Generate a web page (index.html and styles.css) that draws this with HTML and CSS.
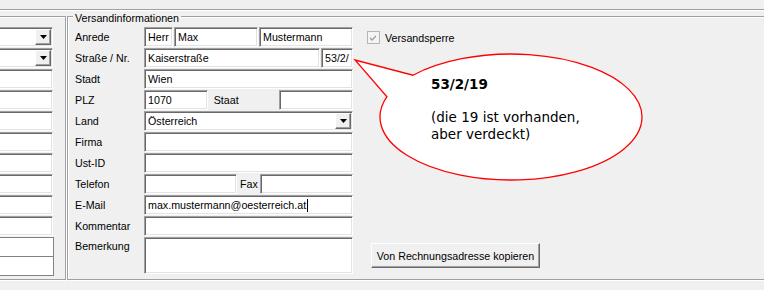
FILE: index.html
```html
<!DOCTYPE html>
<html lang="de">
  <head>
    <title>Versandinformationen</title>
    <link rel="stylesheet" href="styles.css">
  </head>
  <body>
    <div class="topbar"></div>

    <div class="panels">
      <!-- Rechnungsadresse (links, abgeschnitten) -->
      <div class="group billing">
        <div class="input combo"><span class="drop"><svg width="7" height="4" viewBox="0 0 7 4"><path d="M0 0h7L3.5 4z" fill="#000"/></svg></span></div>
        <div class="input combo"><span class="drop"><svg width="7" height="4" viewBox="0 0 7 4"><path d="M0 0h7L3.5 4z" fill="#000"/></svg></span></div>
        <div class="input"></div>
        <div class="input"></div>
        <div class="input"></div>
        <div class="input"></div>
        <div class="input"></div>
        <div class="input"></div>
        <div class="input"></div>
        <div class="input"></div>
        <div class="list">
          <div class="list-row"></div>
          <div class="list-row"></div>
        </div>
      </div>

      <!-- Versandinformationen -->
      <div class="group shipping">
        <div class="group-title">Versandinformationen</div>
        <div class="shipping-body">
          <div class="form">
            <span class="label">Anrede</span>
            <div class="fields">
              <div class="input w-salutation">Herr</div>
              <div class="input w-first">Max</div>
              <div class="input w-last">Mustermann</div>
            </div>

            <span class="label">Straße / Nr.</span>
            <div class="fields">
              <div class="input w-street">Kaiserstraße</div>
              <div class="input w-number">53/2/</div>
            </div>

            <span class="label">Stadt</span>
            <div class="input">Wien</div>

            <span class="label">PLZ</span>
            <div class="fields tight">
              <div class="input w-zip">1070</div>
              <span class="inline-label w-state-label">Staat</span>
              <div class="input w-state"></div>
            </div>

            <span class="label">Land</span>
            <div class="input combo">Österreich<span class="drop"><svg width="7" height="4" viewBox="0 0 7 4"><path d="M0 0h7L3.5 4z" fill="#000"/></svg></span></div>

            <span class="label">Firma</span>
            <div class="input"></div>

            <span class="label">Ust-ID</span>
            <div class="input"></div>

            <span class="label">Telefon</span>
            <div class="fields tight">
              <div class="input w-phone"></div>
              <span class="inline-label w-fax-label">Fax</span>
              <div class="input w-fax"></div>
            </div>

            <span class="label">E-Mail</span>
            <div class="input">max.mustermann@oesterreich.at<span class="caret"></span></div>

            <span class="label">Kommentar</span>
            <div class="input"></div>

            <span class="label label-top">Bemerkung</span>
            <div class="input"></div>
          </div>

          <div class="side">
            <label class="check">
              <span class="checkbox"><svg width="11" height="11" viewBox="0 0 11 11"><path d="M2 5l2 2 4-4v2l-4 4-2-2z" fill="#a0a0a0"/></svg></span>
              Versandsperre
            </label>
            <button class="btn" type="button">Von Rechnungsadresse kopieren</button>
          </div>
        </div>
      </div>
    </div>

    <!-- Sprechblase -->
    <div class="callout">
      <svg width="764" height="290" viewBox="0 0 764 290">
        <path d="M413 75.2A131 63 0 1 1 387 96.7L355 60Z" fill="#fff" stroke="#ff0000" stroke-width="1.3"/>
      </svg>
      <div class="callout-text">
        <b>53/2/19</b><br><br>
        (die 19 ist vorhanden,<br>
        aber verdeckt)
      </div>
    </div>
  </body>
</html>
```

FILE: styles.css
```css
body {
  margin: 0;
  width: 764px;
  height: 290px;
  overflow: hidden;
  background: #f0f0f0;
  font-family: "Liberation Sans", Arial, sans-serif;
  font-size: 10.7px;
  color: #000;
}

.topbar {
  height: 9px;
  border-bottom: 1px solid #a0a0a0;
  box-shadow: 0 1px #fff;
  margin-bottom: 6px;
}

.panels {
  display: flex;
  gap: 1px;
  height: 264px;
}

/* etched group box */
.group {
  box-sizing: border-box;
  border: 1px solid #a0a0a0;
  box-shadow: inset 1px 1px #fff, 1px 1px #fff;
}

.billing {
  width: 68px;
  margin-left: -2px;
  padding-top: 10px;
  display: flex;
  flex-direction: column;
  gap: 1px;
}
.billing .input { margin-left: -10px; width: 64px; }

.list {
  margin-left: -10px;
  width: 65px;
  height: 39px;
  box-sizing: border-box;
  border: 1px solid #828282;
  background: #fff;
}
.list-row { height: 18px; }
.list-row + .list-row { border-top: 1px solid #828282; }

.shipping {
  flex: 1;
  margin-right: -2px;
  padding-left: 7px;
  display: flex;
  flex-direction: column;
}

.group-title {
  width: fit-content;
  margin: -5px 0 2px -2px;
  padding: 0 2px;
  line-height: 13px;
  background: #f0f0f0;
}

.shipping-body {
  flex: 1;
  display: flex;
}

.form {
  display: grid;
  grid-template-columns: 69px 209px;
  grid-template-rows: repeat(10, 20px) 37px;
  row-gap: 1px;
  align-content: start;
}

.label {
  display: flex;
  align-items: center;
}
.label-top { align-items: flex-start; padding-top: 3px; }

.fields { display: flex; gap: 1px; }
.fields.tight { gap: 0; }
.fields.tight .input:first-child { margin-right: 1px; }

/* sunken text field */
.input {
  box-sizing: border-box;
  height: 20px;
  padding: 0 2px 0 3px;
  display: flex;
  align-items: center;
  background: #fff;
  border: 1px solid;
  border-color: #a0a0a0 #fff #fff #a0a0a0;
  box-shadow: inset 1px 1px #696969, inset -1px -1px #e3e3e3;
  white-space: nowrap;
  overflow: hidden;
}
.form > .input:last-child { height: 37px; }

.w-salutation { width: 29px; }
.w-first { width: 84px; }
.w-last { width: 94px; }
.w-street { width: 176px; }
.w-number { width: 32px; }
.w-zip { width: 64px; }
.w-state-label { width: 71px; padding-left: 5px; }
.w-state { width: 74px; }
.w-phone { width: 93px; }
.w-fax-label { width: 22px; padding-left: 2px; }
.w-fax { width: 93px; }

.inline-label {
  box-sizing: border-box;
  display: flex;
  align-items: center;
}

.combo { padding-right: 1px; justify-content: space-between; }
.drop {
  box-sizing: border-box;
  width: 16px;
  height: 16px;
  margin-left: auto;
  display: flex;
  align-items: center;
  justify-content: center;
  background: #f0f0f0;
  border: 1px solid;
  border-color: #fff #696969 #696969 #fff;
  box-shadow: inset -1px -1px #a0a0a0;
}

.caret {
  display: inline-block;
  width: 1px;
  height: 13px;
  margin-left: 1px;
  background: #000;
}

.side {
  padding: 4px 0 0 14px;
  display: flex;
  flex-direction: column;
  align-items: flex-start;
}

.check {
  display: flex;
  align-items: center;
  gap: 5px;
  height: 13px;
  color: #000;
}
.checkbox {
  box-sizing: border-box;
  width: 13px;
  height: 13px;
  display: flex;
  align-items: center;
  justify-content: center;
  background: #f4f4f4;
  border: 1px solid #b5b5b5;
}

.btn {
  margin: auto 0 11px 4px;
  width: 169px;
  height: 25px;
  padding: 0;
  font-family: inherit;
  font-size: 10.7px;
  color: #000;
  background: #f0f0f0;
  border: 1px solid;
  border-color: #fff #696969 #696969 #fff;
  box-shadow: inset -1px -1px #a0a0a0;
}

/* speech bubble laid over the form */
.callout {
  position: absolute;
  left: 0;
  top: 0;
  width: 764px;
  height: 290px;
  pointer-events: none;
}
.callout svg { display: block; }
.callout-text {
  position: absolute;
  left: 431px;
  top: 76px;
  font-family: "DejaVu Sans", Verdana, sans-serif;
  font-size: 13.5px;
  line-height: 16.5px;
  color: #000;
}
```
